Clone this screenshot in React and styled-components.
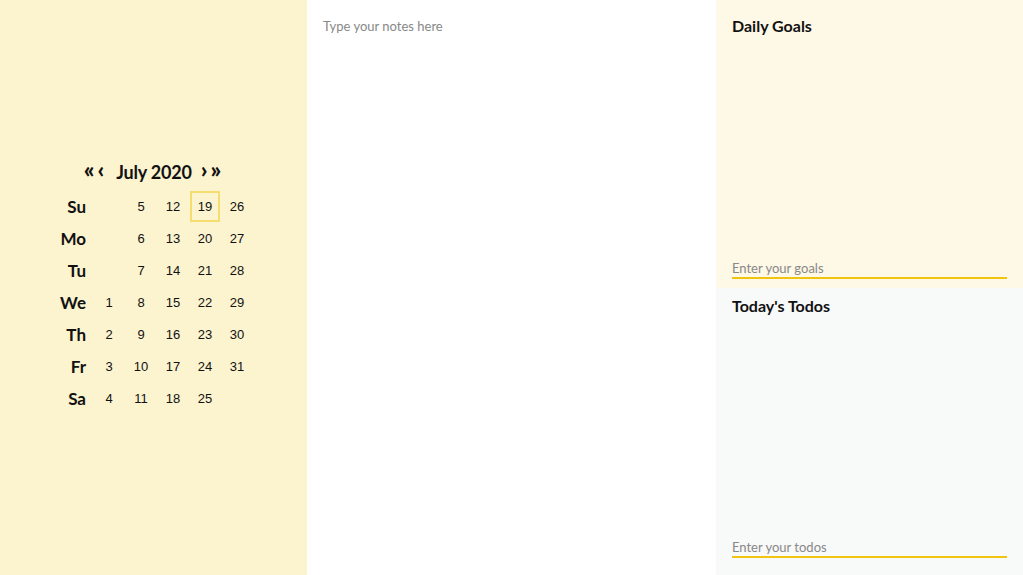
import styled, { createGlobalStyle } from "styled-components";

const GlobalStyle = createGlobalStyle`
  html, body {
    margin: 0;
    padding: 0;
  }
  body {
    font-family: Lato, "Liberation Sans", sans-serif;
  }
`;

const Page = styled.div`
  width: 100vw;
  height: 100vh;
  display: grid;
  grid-template-columns: 307px 409px 1fr;
  overflow: hidden;
`;

const CalendarPanel = styled.div`
  background-color: #fcf3cf;
  display: flex;
  align-items: center;
  justify-content: center;
`;

const Calendar = styled.div`
  display: flex;
  flex-direction: column;
  align-items: center;
  margin-left: 7px;
  margin-top: 2px;
`;

const Header = styled.div`
  display: flex;
  align-items: center;
  color: #111;
  margin-bottom: 7px;
  margin-top: -3px;
  margin-left: -6px;
`;

const Arrow = styled.span`
  font-size: 23px;
  font-weight: 900;
  line-height: 1;
  cursor: pointer;
  margin-top: -5px;
  letter-spacing: 3px;
`;

const MonthTitle = styled.span`
  font-size: 18px;
  font-weight: 700;
  letter-spacing: -0.2px;
  margin: 0 9px 0 9px;
`;

const Grid = styled.div`
  display: grid;
  grid-template-columns: repeat(6, 32px);
  grid-auto-rows: 32px;
`;

const DayName = styled.div`
  font-weight: 700;
  font-size: 17px;
  color: #111;
  display: flex;
  align-items: center;
  justify-content: flex-end;
  padding-right: 7px;
  padding-top: 2px;
`;

const DateCell = styled.div`
  font-family: "Liberation Sans", Arial, sans-serif;
  font-size: 13px;
  color: #111;
  display: flex;
  align-items: center;
  justify-content: center;
  box-sizing: border-box;
  margin: 1px 1px 0;
  padding-top: 1px;
  border: 2px solid ${(p) => (p.$today ? "#f7dc6f" : "transparent")};
`;

const NotesPanel = styled.div`
  background: #fff;
  display: flex;
`;

const Notes = styled.textarea`
  flex: 1;
  border: none;
  outline: none;
  resize: none;
  background: transparent;
  padding: 18px 16px;
  font-family: Lato, sans-serif;
  font-size: 13px;
  color: #333;
  &::placeholder {
    color: #888;
  }
`;

const SideColumn = styled.div`
  display: grid;
  grid-template-rows: 288px 1fr;
`;

const Section = styled.div`
  background-color: ${(p) => p.$bg};
  display: flex;
  flex-direction: column;
  padding: ${(p) => p.$pad};
`;

const SectionTitle = styled.h2`
  margin: 0;
  font-size: 16px;
  font-weight: 700;
  color: #111;
`;

const List = styled.div`
  flex: 1;
`;

const LineInput = styled.input`
  border: none;
  border-bottom: 2px solid #f1c40f;
  background: transparent;
  outline: none;
  padding: 0 0 1px;
  font-family: Lato, sans-serif;
  font-size: 13px;
  color: #333;
  &::placeholder {
    color: #888;
  }
`;

const dayNames = ["Su", "Mo", "Tu", "We", "Th", "Fr", "Sa"];

// July 2020 starts on a Wednesday
const weeks = [
  [null, null, null, 1, 2, 3, 4],
  [5, 6, 7, 8, 9, 10, 11],
  [12, 13, 14, 15, 16, 17, 18],
  [19, 20, 21, 22, 23, 24, 25],
  [26, 27, 28, 29, 30, 31, null],
];

const App = () => {
  return (
    <>
      <GlobalStyle />
      <Page>
        <CalendarPanel>
          <Calendar>
            <Header>
              <Arrow>«‹</Arrow>
              <MonthTitle>July 2020</MonthTitle>
              <Arrow>›»</Arrow>
            </Header>
            <Grid>
              {dayNames.map((name, d) => [
                <DayName key={name}>{name}</DayName>,
                ...weeks.map((week, w) => (
                  <DateCell key={`${d}-${w}`} $today={week[d] === 19}>
                    {week[d]}
                  </DateCell>
                )),
              ])}
            </Grid>
          </Calendar>
        </CalendarPanel>
        <NotesPanel>
          <Notes placeholder="Type your notes here" />
        </NotesPanel>
        <SideColumn>
          <Section $bg="#fef8e6" $pad="16px 16px 9px">
            <SectionTitle>Daily Goals</SectionTitle>
            <List />
            <LineInput placeholder="Enter your goals" />
          </Section>
          <Section $bg="#f8f9f9" $pad="8px 16px 17px">
            <SectionTitle>Today's Todos</SectionTitle>
            <List />
            <LineInput placeholder="Enter your todos" />
          </Section>
        </SideColumn>
      </Page>
    </>
  );
};

export default App;
